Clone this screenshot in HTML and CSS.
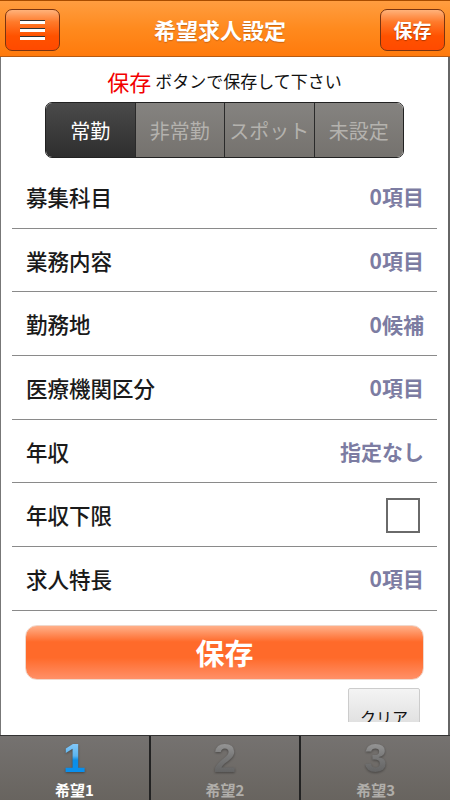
FILE: index.html
```html
<!DOCTYPE html>
<html lang="ja">
<head>
  <meta charset="UTF-8">
  <title>希望求人設定</title>
  <link rel="stylesheet" href="styles.css">
</head>
<body>
  <div class="app">
    <header class="topbar">
      <button class="hbtn menu" aria-label="メニュー">
        <span></span><span></span><span></span>
      </button>
      <h1>希望求人設定</h1>
      <button class="hbtn save">保存</button>
    </header>

    <div class="main">
      <div class="scroll">
        <p class="notice"><span class="red">保存</span> ボタンで保存して下さい</p>

        <div class="segment">
          <div class="seg active">常勤</div>
          <div class="seg">非常勤</div>
          <div class="seg">スポット</div>
          <div class="seg">未設定</div>
        </div>

        <ul class="list">
          <li><span class="label">募集科目</span><span class="val">0項目</span></li>
          <li><span class="label">業務内容</span><span class="val">0項目</span></li>
          <li><span class="label">勤務地</span><span class="val">0候補</span></li>
          <li><span class="label">医療機関区分</span><span class="val">0項目</span></li>
          <li><span class="label">年収</span><span class="val">指定なし</span></li>
          <li><span class="label">年収下限</span><span class="check"></span></li>
          <li><span class="label">求人特長</span><span class="val">0項目</span></li>
        </ul>

        <button class="bigsave">保存</button>
        <div class="clearrow"><button class="clear">クリア</button></div>
      </div>
    </div>

    <nav class="tabbar">
      <div class="tab on"><span class="num">1</span><span class="tlabel">希望1</span></div>
      <div class="tab"><span class="num">2</span><span class="tlabel">希望2</span></div>
      <div class="tab"><span class="num">3</span><span class="tlabel">希望3</span></div>
    </nav>
  </div>
</body>
</html>
```

FILE: styles.css
```css
body {
  margin: 0;
  font-family: "Noto Sans CJK JP", "Liberation Sans", sans-serif;
  background: #fff;
}
.app {
  width: 450px;
  height: 800px;
  display: flex;
  flex-direction: column;
  overflow: hidden;
}

/* ヘッダー */
.topbar {
  flex-shrink: 0;
  height: 55px;
  border-top: 1px solid #a84c00;
  border-bottom: 1px solid #b85a10;
  background: linear-gradient(#ff9d40, #ff8a1e 50%, #ff7a0c);
  display: flex;
  align-items: center;
  justify-content: space-between;
  padding: 0 5px;
}
.topbar h1 {
  margin: 0;
  color: #fff;
  font-size: 22px;
  font-weight: bold;
  text-shadow: 0 1px 1px rgba(120, 50, 0, 0.4);
}
.hbtn {
  height: 42px;
  border: 1px solid #7a3410;
  border-radius: 7px;
  background: linear-gradient(#ffb27a, #ff7a2a 30%, #ff5200 65%, #ff4a00);
  color: #fff;
  font-family: inherit;
  font-weight: bold;
  font-size: 19px;
  padding: 0;
  margin-top: 2px;
}
.menu {
  width: 55px;
  display: flex;
  flex-direction: column;
  align-items: center;
  justify-content: center;
  gap: 4px;
}
.menu span {
  display: block;
  width: 25px;
  height: 3px;
  background: #fff;
  border-top: 1px solid #333;
}
.save {
  width: 65px;
  text-shadow: 0 1px 1px rgba(100, 30, 0, 0.5);
}

/* 本体 */
.main {
  flex: 1;
  min-height: 0;
  display: flex;
  flex-direction: column;
  border-left: 1px solid #777;
  border-right: 2px solid #666;
  padding-bottom: 13px;
}
.scroll {
  flex: 1;
  min-height: 0;
  overflow: hidden;
}
.notice {
  margin: 0;
  height: 45px;
  display: flex;
  align-items: center;
  justify-content: center;
  font-size: 17px;
  color: #111;
  padding-top: 2px;
  box-sizing: border-box;
}
.notice .red {
  color: #f20000;
  font-size: 22px;
  margin-right: 4px;
}

.segment {
  margin: 0 44px 0 44px;
  height: 56px;
  display: flex;
  border: 1px solid #222;
  border-radius: 7px;
  overflow: hidden;
  box-sizing: border-box;
}
.seg {
  flex: 1;
  display: flex;
  align-items: center;
  justify-content: center;
  font-size: 20px;
  color: #b4b2ae;
  background: linear-gradient(#858380, #75726e);
  border-left: 1px solid #2a2a2a;
}
.seg:first-child {
  border-left: none;
}
.seg.active {
  color: #fff;
  background: linear-gradient(#4a4a4a, #2e2e2e);
}

.list {
  list-style: none;
  margin: 7px 11px 0 11px;
  padding: 0;
}
.list li {
  height: 62.7px;
  border-bottom: 1px solid #8a8a8a;
  display: flex;
  align-items: center;
  justify-content: space-between;
  padding: 0 13px 0 14px;
}
.label {
  font-size: 21.5px;
  font-weight: 500;
  color: #1a1a1a;
}
.val {
  font-size: 21px;
  font-weight: bold;
  color: #7c7ca2;
}
.check {
  width: 30px;
  height: 31px;
  border: 2px solid #6a6a6a;
  margin-right: 4px;
  margin-top: 2px;
}

.bigsave {
  display: block;
  margin: 14px 24px 0 24px;
  width: 399px;
  height: 55px;
  border: 1px solid #f0d8cc;
  border-radius: 12px;
  background: linear-gradient(#ffb08a, #ff6a2a 30%, #ff6a2a 60%, #ff9068);
  color: #fff;
  font-family: inherit;
  font-size: 29px;
  font-weight: bold;
  padding: 0;
}
.clearrow {
  display: flex;
  justify-content: flex-end;
  padding-right: 28px;
  margin-top: 8px;
}
.clear {
  width: 72px;
  height: 44px;
  border: 1px solid #ccc;
  border-radius: 2px;
  background: linear-gradient(#f4f4f4, #dcdcdc);
  font-family: inherit;
  font-size: 16px;
  color: #111;
  padding: 14px 0 0 0;
}

/* タブバー */
.tabbar {
  flex-shrink: 0;
  height: 64px;
  border-top: 1px solid #333;
  display: flex;
  background: #222;
  gap: 2px;
}
.tab {
  flex: 1;
  display: flex;
  flex-direction: column;
  align-items: center;
  background: linear-gradient(#757270, #68645f);
}
.num {
  font-family: "Liberation Sans", sans-serif;
  font-weight: bold;
  font-size: 41px;
  line-height: 42px;
  margin-top: 1px;
  background: linear-gradient(#a5a5a5, #7a7a7a 45%, #5a5a5a);
  -webkit-background-clip: text;
  background-clip: text;
  color: transparent;
  filter: drop-shadow(0 1px 1px rgba(0, 0, 0, 0.35));
}
.tab.on .num {
  background: linear-gradient(#9ad4ff, #5ab4f0 45%, #0a8ee8 55%, #0a90f0);
  -webkit-background-clip: text;
  background-clip: text;
}
.tlabel {
  font-size: 15px;
  font-weight: bold;
  color: #b0aeaa;
  line-height: 18px;
  margin-top: 2px;
}
.tab.on .tlabel {
  color: #fff;
}
```
